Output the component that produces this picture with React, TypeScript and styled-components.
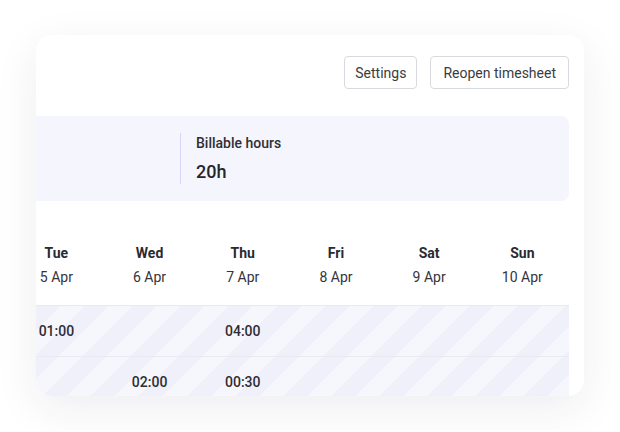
import React from 'react'
import { createGlobalStyle, styled } from 'styled-components'

const GlobalStyle = createGlobalStyle`
  html, body {
    margin: 0;
    padding: 0;
    background: #ffffff;
    font-family: Roboto, 'Liberation Sans', Arial, sans-serif;
    color: #2c2c33;
  }
`

const Page = styled.div`
  padding: 35px 36px;
`

const Card = styled.div`
  width: 548px;
  height: 361px;
  background: #ffffff;
  border-radius: 16px;
  box-shadow: 0 12px 44px rgba(40, 40, 80, 0.08);
  overflow: hidden;
`

const Toolbar = styled.div`
  display: flex;
  justify-content: flex-end;
  gap: 13px;
  padding: 21px 15px 0 0;
`

const Button = styled.button<{ $pad: number }>`
  height: 33px;
  padding: 0 ${(p) => p.$pad}px;
  border: 1px solid #d9d9e0;
  border-radius: 4px;
  background: #ffffff;
  font-family: Roboto, 'Liberation Sans', Arial, sans-serif;
  font-size: 14px;
  color: #3b3b42;
  cursor: pointer;
`

// the week grid is scrolled sideways, so only its right part shows
const Viewport = styled.div`
  overflow: hidden;
  margin-top: 27px;
`

const Sheet = styled.div`
  width: 923.4px;
  margin-left: -375.4px;
  padding: 0 15px 0 16px;
  box-sizing: border-box;
`

const StatsPanel = styled.div`
  display: flex;
  padding: 17px 24px;
  background: #f5f5fd;
  border-radius: 8px;
`

const Stat = styled.div<{ $width?: number; $divided?: boolean }>`
  display: flex;
  flex-direction: column;
  gap: 7px;
  width: ${(p) => (p.$width ? `${p.$width}px` : 'auto')};
  padding-left: ${(p) => (p.$divided ? '15px' : '0')};
  border-left: ${(p) => (p.$divided ? '1px solid #d9d4fa' : 'none')};
  box-sizing: border-box;
`

const StatLabel = styled.div`
  font-size: 14px;
  line-height: 20px;
  font-weight: 500;
  color: #2f2f36;
`

const StatValue = styled.div`
  font-size: 18px;
  line-height: 24px;
  font-weight: 500;
  color: #26262c;
`

const Grid = styled.div`
  display: grid;
  grid-template-columns: 240px repeat(7, 93.2px);
`

const HeaderRow = styled(Grid)`
  padding: 42px 0 18px;
`

const DayHead = styled.div`
  display: flex;
  flex-direction: column;
  align-items: center;
  gap: 4px;
`

const DayName = styled.div`
  font-size: 14px;
  line-height: 20px;
  font-weight: 700;
  color: #2a2a30;
`

const DayDate = styled.div`
  font-size: 14px;
  line-height: 20px;
  color: #34343a;
`

const Body = styled.div`
  background: repeating-linear-gradient(
    135deg,
    #f6f6fd 0 17px,
    #f0f0fa 17px 34px
  );
`

const Row = styled(Grid)`
  height: 50px;
  border-top: 1px solid #e9e9f1;
`

const Cell = styled.div`
  display: flex;
  align-items: center;
  justify-content: center;
  font-size: 14px;
  font-weight: 500;
  color: #2d2d33;
`

const days = [
  { name: 'Mon', date: '4 Apr' },
  { name: 'Tue', date: '5 Apr' },
  { name: 'Wed', date: '6 Apr' },
  { name: 'Thu', date: '7 Apr' },
  { name: 'Fri', date: '8 Apr' },
  { name: 'Sat', date: '9 Apr' },
  { name: 'Sun', date: '10 Apr' },
]

const rows = [
  { project: 'Website redesign', hours: ['', '01:00', '', '04:00', '', '', ''] },
  { project: 'Client meetings', hours: ['', '', '02:00', '00:30', '', '', ''] },
]

export default function App() {
  return (
    <>
      <GlobalStyle />
      <Page>
        <Card>
          <Toolbar>
            <Button $pad={10}>Settings</Button>
            <Button $pad={12}>Reopen timesheet</Button>
          </Toolbar>
          <Viewport>
            <Sheet>
              <StatsPanel>
                <Stat $width={479.4}>
                  <StatLabel>Total hours</StatLabel>
                  <StatValue>28h</StatValue>
                </Stat>
                <Stat $divided>
                  <StatLabel>Billable hours</StatLabel>
                  <StatValue>20h</StatValue>
                </Stat>
              </StatsPanel>
              <HeaderRow>
                <div />
                {days.map((d) => (
                  <DayHead key={d.name}>
                    <DayName>{d.name}</DayName>
                    <DayDate>{d.date}</DayDate>
                  </DayHead>
                ))}
              </HeaderRow>
              <Body>
                {rows.map((r) => (
                  <Row key={r.project}>
                    <Cell>{r.project}</Cell>
                    {r.hours.map((h, i) => (
                      <Cell key={i}>{h}</Cell>
                    ))}
                  </Row>
                ))}
              </Body>
            </Sheet>
          </Viewport>
        </Card>
      </Page>
    </>
  )
}
